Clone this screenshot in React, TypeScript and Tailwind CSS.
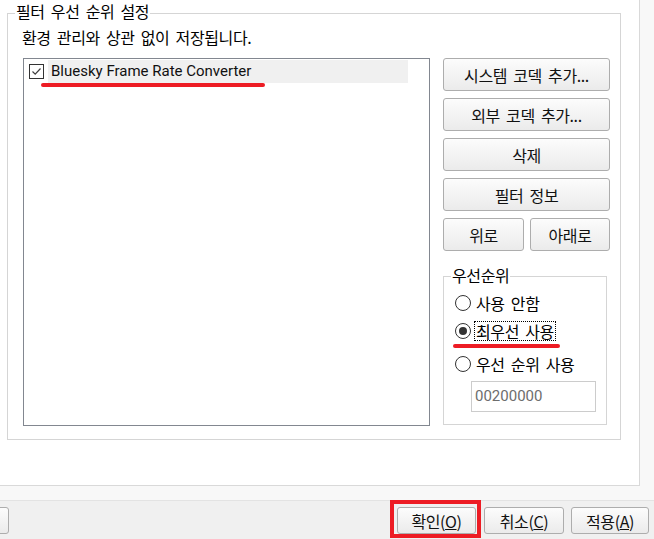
import React from "react";

const btn =
  "flex items-center justify-center border border-[#adadad] rounded-[3px] bg-linear-to-b from-[#fcfcfc] to-[#ebebeb] text-[#111] leading-[20px]";

function Radio({ checked }: { checked?: boolean }) {
  return (
    <span className="relative w-[16px] h-[16px] rounded-full border border-[#333] bg-white flex items-center justify-center shrink-0">
      {checked && <span className="w-[8px] h-[8px] rounded-full bg-[#333]" />}
    </span>
  );
}

export default function App() {
  return (
    <div className="relative w-[654px] h-[539px] overflow-hidden bg-[#f8f8f8] flex flex-col font-['Noto_Sans_CJK_KR',sans-serif] text-[16px] tracking-[-0.4px] [word-spacing:3px] text-black">
      <div className="h-[500px] flex shrink-0">
        <div className="w-[640px] h-[486px] bg-white border-r border-b border-[#d9d9d9] pt-[13px] pl-[7px]">
          {/* outer group box */}
          <div className="relative w-[614px] h-[427px] border border-[#d5d5d5] pl-[15px] pt-[13px] pr-[10px] flex flex-col">
            <span className="absolute -top-[13px] left-[7px] px-px bg-white leading-[20px]">
              필터 우선 순위 설정
            </span>
            <div className="leading-[20px] -ml-px">환경 관리와 상관 없이 저장됩니다.</div>
            <div className="mt-[11px] flex gap-[13px]">
              {/* list box */}
              <div className="w-[407px] h-[368px] border border-[#828790] bg-white pt-px">
                <div className="h-[23px] flex items-center pl-[5px]">
                  <span className="w-[15px] h-[15px] border border-[#333] bg-white flex items-center justify-center shrink-0">
                    <svg width="13" height="13" viewBox="0 0 13 13">
                      <polyline
                        points="2.5,6.5 5.2,9.2 10.5,3.5"
                        fill="none"
                        stroke="#404040"
                        strokeWidth="1.2"
                      />
                    </svg>
                  </span>
                  <div className="ml-[4px] w-[360px] h-[23px] bg-[#f0f0f0] flex items-center pl-[3px] font-['Roboto',sans-serif] tracking-normal [word-spacing:0px] text-[15px] text-[#111]">
                    Bluesky Frame Rate Converter
                  </div>
                </div>
              </div>
              {/* right column */}
              <div className="w-[167px] flex flex-col gap-[7px]">
                <div className={`${btn} h-[33px]`}>시스템 코덱 추가...</div>
                <div className={`${btn} h-[33px]`}>외부 코덱 추가...</div>
                <div className={`${btn} h-[33px]`}>삭제</div>
                <div className={`${btn} h-[33px]`}>필터 정보</div>
                <div className="flex gap-[6px]">
                  <div className={`${btn} h-[33px] w-[81px]`}>위로</div>
                  <div className={`${btn} h-[33px] w-[80px]`}>아래로</div>
                </div>
                <div className="relative mt-[18px] w-[164px] h-[149px] border border-[#d5d5d5] pt-[16px] pl-[11px] flex flex-col">
                  <span className="absolute -top-[12px] left-[7px] px-px bg-white leading-[20px]">
                    우선순위
                  </span>
                  <div className="h-[20px] flex items-center gap-[3px]">
                    <Radio />
                    <span className="h-[20px] px-px border border-transparent leading-[18px]">사용 안함</span>
                  </div>
                  <div className="mt-[8px] h-[20px] flex items-center gap-[3px]">
                    <Radio checked />
                    <span className="h-[20px] px-px border border-dotted border-black leading-[18px]">
                      최우선 사용
                    </span>
                  </div>
                  <div className="mt-[13px] h-[20px] flex items-center gap-[3px]">
                    <Radio />
                    <span className="h-[20px] px-px border border-transparent leading-[18px]">우선 순위 사용</span>
                  </div>
                  <div className="mt-[7px] ml-[16px] w-[125px] h-[31px] border border-[#cccccc] bg-white flex items-center pl-[3px] font-['Roboto',sans-serif] tracking-normal text-[15px] text-[#6d6d6d]">
                    00200000
                  </div>
                </div>
              </div>
            </div>
          </div>
        </div>
      </div>
      {/* bottom bar */}
      <div className="h-[39px] bg-[#f0f0f0] border-t border-[#e3e3e3] flex pt-[6px] pr-[5px]">
        <div className={`${btn} h-[27px] w-[70px] -ml-[61px]`} />
        <div className="flex-1" />
        <div className={`${btn} h-[27px] w-[79px]`}>
          확인(<span className="underline">O</span>)
        </div>
        <div className={`${btn} h-[27px] w-[80px] ml-[8px]`}>
          취소(<span className="underline">C</span>)
        </div>
        <div className={`${btn} h-[27px] w-[78px] ml-[7px]`}>
          적용(<span className="underline">A</span>)
        </div>
      </div>

      {/* annotations */}
      <div className="absolute left-[41px] top-[83px] w-[224px] h-[4px] rounded-full bg-[#ed1c24]" />
      <div className="absolute left-[453px] top-[344px] w-[107px] h-[4px] rounded-full bg-[#ed1c24]" />
      <div className="absolute left-[390px] top-[500px] w-[91px] h-[38px] border-[4px] border-[#ed1c24]" />
    </div>
  );
}
